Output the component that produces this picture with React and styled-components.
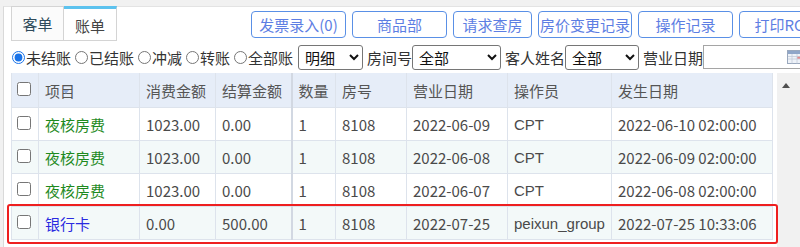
import React from "react";
import styled, { createGlobalStyle } from "styled-components";

const GlobalStyle = createGlobalStyle`
  html, body {
    margin: 0;
    padding: 0;
    background: #f1f1f1;
    overflow: hidden;
  }
  body {
    font-family: "Noto Sans CJK SC", "Noto Sans", sans-serif;
    font-size: 15px;
    color: #333;
  }
`;

const toolButtons = [
  { label: "发票录入(0)", w: 95 },
  { label: "商品部", w: 95 },
  { label: "请求查房", w: 79 },
  { label: "房价变更记录", w: 94 },
  { label: "操作记录", w: 95 },
  { label: "打印RC单", w: 95 },
];

const accountKinds = ["未结账", "已结账", "冲减", "转账", "全部账"];

const columns = [
  { key: "check", title: "", w: 27 },
  { key: "item", title: "项目", w: 101, sorted: true },
  { key: "cost", title: "消费金额", w: 76 },
  { key: "settle", title: "结算金额", w: 76 },
  { key: "qty", title: "数量", w: 44, split: true },
  { key: "room", title: "房号", w: 71 },
  { key: "bizDate", title: "营业日期", w: 101 },
  { key: "operator", title: "操作员", w: 104 },
  { key: "time", title: "发生日期", w: 161 },
];

const rows = [
  { item: "夜核房费", kind: "fee", cost: "1023.00", settle: "0.00", qty: "1", room: "8108", bizDate: "2022-06-09", operator: "CPT", time: "2022-06-10 02:00:00" },
  { item: "夜核房费", kind: "fee", cost: "1023.00", settle: "0.00", qty: "1", room: "8108", bizDate: "2022-06-08", operator: "CPT", time: "2022-06-09 02:00:00" },
  { item: "夜核房费", kind: "fee", cost: "1023.00", settle: "0.00", qty: "1", room: "8108", bizDate: "2022-06-07", operator: "CPT", time: "2022-06-08 02:00:00" },
  { item: "银行卡", kind: "pay", cost: "0.00", settle: "500.00", qty: "1", room: "8108", bizDate: "2022-07-25", operator: "peixun_group", time: "2022-07-25 10:33:06" },
];

const App = () => {
  return (
    <>
      <GlobalStyle />
      <Frame>
        <TabBar>
          <Tab>客单</Tab>
          <Tab active>账单</Tab>
          <ToolGroup>
            {toolButtons.map((b) => (
              <ToolButton key={b.label} w={b.w}>
                {b.label}
              </ToolButton>
            ))}
          </ToolGroup>
        </TabBar>

        <FilterRow>
          <RadioGroup>
            {accountKinds.map((k, i) => (
              <RadioItem key={k}>
                <input type="radio" name="acct" defaultChecked={i === 0} />
                {k}
              </RadioItem>
            ))}
          </RadioGroup>
          <Select w={65} defaultValue="明细">
            <option>明细</option>
            <option>汇总</option>
          </Select>
          <FieldLabel>房间号</FieldLabel>
          <Select w={89} defaultValue="全部">
            <option>全部</option>
          </Select>
          <FieldLabel>客人姓名</FieldLabel>
          <Select w={74} defaultValue="全部">
            <option>全部</option>
          </Select>
          <FieldLabel>营业日期</FieldLabel>
          <DateBox>
            <DateInput type="text" />
            <CalendarIcon viewBox="0 0 16 14">
              <rect x="0.5" y="0.5" width="15" height="13" fill="#eef2f8" stroke="#9aa8bd" />
              <rect x="1" y="1" width="14" height="3" fill="#8fa6c8" />
              <rect x="10" y="6" width="4" height="3" fill="#e88a8a" />
              <path d="M1 9h14M1 6.5h14M5 4v9.5M10 4v9.5" stroke="#c3ccd9" strokeWidth="0.8" />
            </CalendarIcon>
          </DateBox>
        </FilterRow>

        <TableArea>
          <TableWrap>
            <Grid>
              <colgroup>
                {columns.map((c) => (
                  <Col key={c.key} w={c.w} />
                ))}
              </colgroup>
              <thead>
                <tr>
                  {columns.map((c) =>
                    c.key === "check" ? (
                      <Th key={c.key} check>
                        <CheckBox type="checkbox" />
                      </Th>
                    ) : (
                      <Th key={c.key} split={c.split}>
                        {c.title}
                        {c.sorted && <SortMark />}
                      </Th>
                    )
                  )}
                </tr>
              </thead>
              <tbody>
                {rows.map((r, i) => (
                  <Tr key={i} alt={i % 2 === 1}>
                    <Td check>
                      <CheckBox type="checkbox" />
                    </Td>
                    <Td>
                      <ItemName kind={r.kind}>{r.item}</ItemName>
                    </Td>
                    <Td>{r.cost}</Td>
                    <Td>{r.settle}</Td>
                    <Td split>{r.qty}</Td>
                    <Td>{r.room}</Td>
                    <Td>{r.bizDate}</Td>
                    <Td latin>{r.operator}</Td>
                    <Td>{r.time}</Td>
                  </Tr>
                ))}
              </tbody>
            </Grid>
            <Highlight />
          </TableWrap>
          <ScrollTrack>
            <ScrollArrow />
          </ScrollTrack>
        </TableArea>
      </Frame>
    </>
  );
};

const Frame = styled.div`
  margin: 6px 0 0 3px;
  background: #fff;
  border-left: 1px solid #d9d9d9;
  border-top: 1px solid #e3e3e3;
  height: 240px;
`;

const TabBar = styled.div`
  display: flex;
  align-items: center;
  height: 34px;
  padding-left: 7px;
`;

const Tab = styled.div`
  flex-shrink: 0;
  box-sizing: border-box;
  width: 53px;
  height: 35px;
  margin-top: -1px;
  align-self: flex-start;
  display: flex;
  align-items: center;
  justify-content: center;
  border: 1px solid #d4d4d4;
  border-left: ${(p) => (p.active ? "none" : "1px solid #d4d4d4")};
  border-top: ${(p) => (p.active ? "3px solid #5cc2ee" : "1px solid #d4d4d4")};
  padding-top: ${(p) => (p.active ? "1px" : "0")};
  background: ${(p) => (p.active ? "#fff" : "#fbfbfb")};
  color: ${(p) => (p.active ? "#444" : "#2f4a5a")};
  font-size: 15px;
`;

const ToolGroup = styled.div`
  display: flex;
  gap: 6px;
  margin-left: 134px;
  flex-shrink: 0;
`;

const ToolButton = styled.div`
  flex-shrink: 0;
  box-sizing: border-box;
  width: ${(p) => p.w}px;
  height: 27px;
  display: flex;
  align-items: center;
  justify-content: center;
  white-space: nowrap;
  border: 1px solid #5a90e6;
  border-radius: 4px;
  background: #fff;
  color: #5d7ee3;
  font-size: 15px;
`;

const FilterRow = styled.div`
  display: flex;
  align-items: center;
  height: 32px;
  padding-left: 5px;
  white-space: nowrap;
  color: #333;
`;

const RadioGroup = styled.div`
  display: flex;
  align-items: center;
  flex-shrink: 0;
  margin-right: 4px;
`;

const RadioItem = styled.label`
  display: flex;
  align-items: center;
  margin-right: 1px;
  input {
    width: 13px;
    height: 13px;
    margin: 0 1px 0 3px;
    accent-color: #1a73e8;
  }
`;

const FieldLabel = styled.span`
  flex-shrink: 0;
`;

const Select = styled.select`
  flex-shrink: 0;
  box-sizing: border-box;
  width: ${(p) => p.w}px;
  height: 25px;
  margin: 0 4px 0 0;
  padding: 0 2px;
  border: 1px solid #767676;
  border-radius: 3px;
  background: #fff;
  color: #111;
  font-family: "Noto Sans CJK SC", sans-serif;
  font-size: 15px;
`;

const DateBox = styled.div`
  position: relative;
  flex-shrink: 0;
`;

const DateInput = styled.input`
  box-sizing: border-box;
  display: block;
  width: 110px;
  height: 24px;
  margin: 0;
  border: 1px solid #a5a5a5;
  background: #fff;
`;

const CalendarIcon = styled.svg`
  position: absolute;
  left: 84px;
  top: 5px;
  width: 16px;
  height: 14px;
`;

const TableArea = styled.div`
  display: flex;
  padding-left: 7px;
`;

const TableWrap = styled.div`
  position: relative;
  width: 761px;
  flex-shrink: 0;
`;

const Grid = styled.table`
  width: 761px;
  table-layout: fixed;
  border-collapse: collapse;
  font-size: 15px;
`;

const Col = styled.col`
  width: ${(p) => p.w}px;
`;

const Th = styled.th`
  position: relative;
  height: 34px;
  padding: ${(p) => (p.check ? "0 0 0 5px" : "0 6px")};
  text-align: left;
  font-weight: normal;
  color: #555;
  background: #e6edf8;
  border: 1px solid #dde3ec;
  border-top: none;
  border-left: ${(p) => (p.split ? "2px solid #d2d8e2" : "1px solid #dde3ec")};
  white-space: nowrap;
`;

const SortMark = styled.span`
  position: absolute;
  left: 24px;
  top: 17px;
  border-left: 3px solid transparent;
  border-right: 3px solid transparent;
  border-top: 4px solid #7f9fd4;
  opacity: 0.8;
`;

const Tr = styled.tr`
  background: ${(p) => (p.alt ? "#f3f9f9" : "#fff")};
`;

const Td = styled.td`
  height: 33px;
  box-sizing: border-box;
  padding: ${(p) => (p.check ? "0 0 0 5px" : "0 6px")};
  color: #4a4a4a;
  font-family: ${(p) =>
    p.latin ? `"Liberation Sans", "Noto Sans CJK SC", sans-serif` : "inherit"};
  border: 1px solid #dde3ec;
  border-left: ${(p) => (p.split ? "2px solid #d2d8e2" : "1px solid #dde3ec")};
  white-space: nowrap;
  overflow: hidden;
`;

const CheckBox = styled.input`
  display: block;
  width: 14px;
  height: 14px;
  margin: 0 0 2px 0;
`;

const ItemName = styled.span`
  color: ${(p) => (p.kind === "pay" ? "#2a2ae0" : "#1e8a1e")};
`;

const Highlight = styled.div`
  position: absolute;
  left: -4px;
  top: 131px;
  width: 771px;
  height: 40px;
  box-sizing: border-box;
  border: 2px solid #ee1f1f;
  border-radius: 3px;
  pointer-events: none;
`;

const ScrollTrack = styled.div`
  flex: 1;
  margin-left: 5px;
  height: 180px;
  background: #f1f1f1;
  display: flex;
  justify-content: center;
  padding: 10px 6px 0 0;
`;

const ScrollArrow = styled.span`
  width: 0;
  height: 0;
  border-left: 4px solid transparent;
  border-right: 4px solid transparent;
  border-bottom: 5px solid #505050;
`;

export default App;
